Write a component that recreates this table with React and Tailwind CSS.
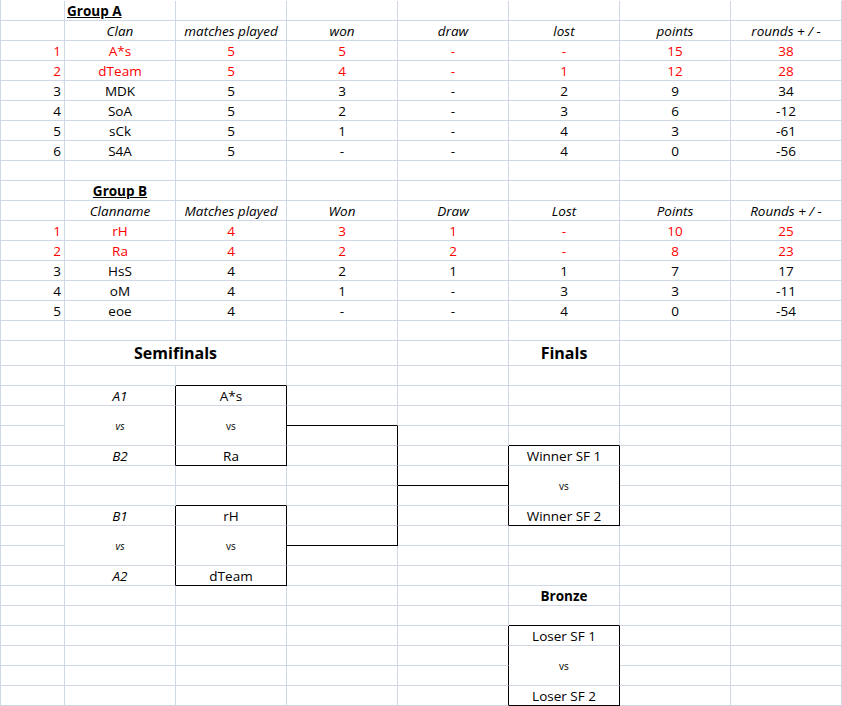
import React from "react";

const KIND = {
  n: "justify-end pr-[3px]",
  c: "justify-center",
  i: "justify-center italic",
  gA: "justify-start pl-[2px] font-bold underline",
  gB: "justify-center font-bold underline",
  h: "justify-center font-bold text-[16px]",
  b: "justify-center font-bold",
  vi: "justify-center italic text-[10px]",
  v: "justify-center text-[10px]",
};

const SKIP = "__skip__";
const E = () => Array(8).fill("");

function dataRow(vals, red) {
  return vals.map((v, i) => ({ t: v, k: i === 0 ? "n" : "c", red }));
}

const rows = [];
rows[0] = ["", { t: "Group A", k: "gA" }, "", "", "", "", "", ""];
rows[1] = ["", ...["Clan", "matches played", "won", "draw", "lost", "points", "rounds + / -"].map((t) => ({ t, k: "i" }))];
rows[2] = dataRow(["1", "A*s", "5", "5", "-", "-", "15", "38"], true);
rows[3] = dataRow(["2", "dTeam", "5", "4", "-", "1", "12", "28"], true);
rows[4] = dataRow(["3", "MDK", "5", "3", "-", "2", "9", "34"]);
rows[5] = dataRow(["4", "SoA", "5", "2", "-", "3", "6", "-12"]);
rows[6] = dataRow(["5", "sCk", "5", "1", "-", "4", "3", "-61"]);
rows[7] = dataRow(["6", "S4A", "5", "-", "-", "4", "0", "-56"]);
rows[8] = E();
rows[9] = ["", { t: "Group B", k: "gB" }, "", "", "", "", "", ""];
rows[10] = ["", ...["Clanname", "Matches played", "Won", "Draw", "Lost", "Points", "Rounds + / -"].map((t) => ({ t, k: "i" }))];
rows[11] = dataRow(["1", "rH", "4", "3", "1", "-", "10", "25"], true);
rows[12] = dataRow(["2", "Ra", "4", "2", "2", "-", "8", "23"], true);
rows[13] = dataRow(["3", "HsS", "4", "2", "1", "1", "7", "17"]);
rows[14] = dataRow(["4", "oM", "4", "1", "-", "3", "3", "-11"]);
rows[15] = dataRow(["5", "eoe", "4", "-", "-", "4", "0", "-54"]);
rows[16] = E();
rows[17] = ["", { t: "Semifinals", k: "h", cs: true }, SKIP, "", "", { t: "Finals", k: "h" }, "", ""];
rows[18] = E();
rows[19] = ["", { t: "A1", k: "i" }, "A*s", "", "", "", "", ""];
rows[20] = ["", { t: "vs", k: "vi", rs: true }, { t: "vs", k: "v", rs: true }, "", "", "", "", ""];
rows[21] = ["", SKIP, SKIP, "", "", "", "", ""];
rows[22] = ["", { t: "B2", k: "i" }, "Ra", "", "", "Winner SF 1", "", ""];
rows[23] = ["", "", "", "", "", { t: "vs", k: "v", rs: true }, "", ""];
rows[24] = ["", "", "", "", "", SKIP, "", ""];
rows[25] = ["", { t: "B1", k: "i" }, "rH", "", "", "Winner SF 2", "", ""];
rows[26] = ["", { t: "vs", k: "vi", rs: true }, { t: "vs", k: "v", rs: true }, "", "", "", "", ""];
rows[27] = ["", SKIP, SKIP, "", "", "", "", ""];
rows[28] = ["", { t: "A2", k: "i" }, "dTeam", "", "", "", "", ""];
rows[29] = ["", "", "", "", "", { t: "Bronze", k: "b" }, "", ""];
rows[30] = E();
rows[31] = ["", "", "", "", "", "Loser SF 1", "", ""];
rows[32] = ["", "", "", "", "", { t: "vs", k: "v", rs: true }, "", ""];
rows[33] = ["", "", "", "", "", SKIP, "", ""];
rows[34] = ["", "", "", "", "", "Loser SF 2", "", ""];

const inR = (r, a, b) => r >= a && r <= b;

function blackRight(r, c) {
  if (c === 1 || c === 2) return inR(r, 19, 22) || inR(r, 25, 28);
  if (c === 3) return inR(r, 21, 26);
  if (c === 4 || c === 5) return inR(r, 22, 25) || inR(r, 31, 34);
  return false;
}

function blackBottom(r, c) {
  if (c === 2) return [18, 22, 24, 28].includes(r);
  if (c === 3) return [20, 26].includes(r);
  if (c === 4) return r === 23;
  if (c === 5) return [21, 25, 30, 34].includes(r);
  return false;
}

export default function App() {
  const cells = [];
  rows.forEach((row, r) => {
    row.forEach((cell, c) => {
      if (cell === SKIP) return;
      const d = typeof cell === "string" ? { t: cell, k: c === 0 ? "n" : "c" } : cell;
      const endRow = d.rs ? r + 1 : r;
      const endCol = d.cs ? c + 1 : c;
      const rc = blackRight(r, endCol) ? "border-r-black" : "border-r-[#d0d7e5]";
      const bc = blackBottom(endRow, c) ? "border-b-black" : "border-b-[#d0d7e5]";
      const cls = [
        "flex items-center whitespace-nowrap overflow-visible border-r border-b leading-[18px]",
        rc,
        bc,
        KIND[d.k] || KIND.c,
        d.red ? "text-[#ff0000]" : "text-black",
        d.rs ? "row-span-2" : "",
        d.cs ? "col-span-2" : "",
      ].join(" ");
      cells.push(
        <div key={r + "-" + c} className={cls}>
          {d.t}
        </div>
      );
    });
  });

  return (
    <div className="w-[842px] h-[706px] bg-white overflow-hidden">
      <div className="grid grid-cols-[64px_repeat(7,111px)] grid-rows-[repeat(17,20px)_25px_repeat(17,20px)] border-l border-l-[#d0d7e5] pt-px font-['Open_Sans',sans-serif] text-[13.5px] text-black">
        {cells}
      </div>
    </div>
  );
}
